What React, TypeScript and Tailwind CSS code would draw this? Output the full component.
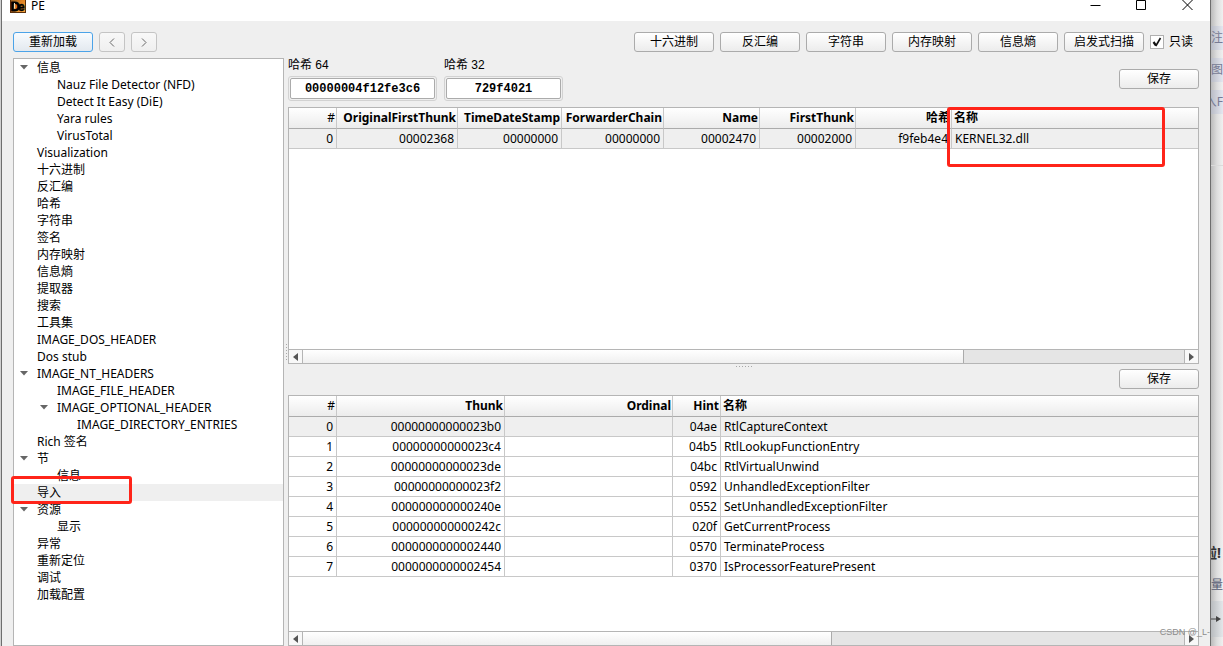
import { useState } from "react";
import clsx from "clsx";

interface TreeItem {
  label: string;
  level: 0 | 1 | 2;
  open?: boolean;
}

const TREE: TreeItem[] = [
  { label: "信息", level: 0, open: true },
  { label: "Nauz File Detector (NFD)", level: 1 },
  { label: "Detect It Easy (DiE)", level: 1 },
  { label: "Yara rules", level: 1 },
  { label: "VirusTotal", level: 1 },
  { label: "Visualization", level: 0 },
  { label: "十六进制", level: 0 },
  { label: "反汇编", level: 0 },
  { label: "哈希", level: 0 },
  { label: "字符串", level: 0 },
  { label: "签名", level: 0 },
  { label: "内存映射", level: 0 },
  { label: "信息熵", level: 0 },
  { label: "提取器", level: 0 },
  { label: "搜索", level: 0 },
  { label: "工具集", level: 0 },
  { label: "IMAGE_DOS_HEADER", level: 0 },
  { label: "Dos stub", level: 0 },
  { label: "IMAGE_NT_HEADERS", level: 0, open: true },
  { label: "IMAGE_FILE_HEADER", level: 1 },
  { label: "IMAGE_OPTIONAL_HEADER", level: 1, open: true },
  { label: "IMAGE_DIRECTORY_ENTRIES", level: 2 },
  { label: "Rich 签名", level: 0 },
  { label: "节", level: 0, open: true },
  { label: "信息", level: 1 },
  { label: "导入", level: 0 },
  { label: "资源", level: 0, open: true },
  { label: "显示", level: 1 },
  { label: "异常", level: 0 },
  { label: "重新定位", level: 0 },
  { label: "调试", level: 0 },
  { label: "加载配置", level: 0 },
];

const INDENT = ["pl-[6px]", "pl-[26px]", "pl-[46px]"];

const TOOLS = ["十六进制", "反汇编", "字符串", "内存映射", "信息熵", "启发式扫描"];

interface Column {
  title: string;
  width: string;
  left?: boolean;
}

const IMPORT_COLUMNS: Column[] = [
  { title: "#", width: "w-[48px]" },
  { title: "OriginalFirstThunk", width: "w-[121px]" },
  { title: "TimeDateStamp", width: "w-[104px]" },
  { title: "ForwarderChain", width: "w-[102px]" },
  { title: "Name", width: "w-[96px]" },
  { title: "FirstThunk", width: "w-[96px]" },
  { title: "哈希", width: "w-[96px]" },
  { title: "名称", width: "w-auto", left: true },
];

const IMPORT_ROWS = [
  ["0", "00002368", "00000000", "00000000", "00002470", "00002000", "f9feb4e4", "KERNEL32.dll"],
];

const THUNK_COLUMNS: Column[] = [
  { title: "#", width: "w-[48px]" },
  { title: "Thunk", width: "w-[168px]" },
  { title: "Ordinal", width: "w-[168px]" },
  { title: "Hint", width: "w-[48px]" },
  { title: "名称", width: "w-auto", left: true },
];

const THUNK_ROWS = [
  ["0", "00000000000023b0", "", "04ae", "RtlCaptureContext"],
  ["1", "00000000000023c4", "", "04b5", "RtlLookupFunctionEntry"],
  ["2", "00000000000023de", "", "04bc", "RtlVirtualUnwind"],
  ["3", "00000000000023f2", "", "0592", "UnhandledExceptionFilter"],
  ["4", "000000000000240e", "", "0552", "SetUnhandledExceptionFilter"],
  ["5", "000000000000242c", "", "020f", "GetCurrentProcess"],
  ["6", "0000000000002440", "", "0570", "TerminateProcess"],
  ["7", "0000000000002454", "", "0370", "IsProcessorFeaturePresent"],
];

function PushButton({ children, focused }: { children: React.ReactNode; focused?: boolean }) {
  return (
    <button
      type="button"
      className={clsx(
        "h-5 w-20 shrink-0 rounded-[3px] border text-center leading-[18px] whitespace-nowrap",
        focused
          ? "border-[#4ba3e8] bg-linear-to-b from-[#f8fbfe] to-[#e3e9ef]"
          : "border-[#ababab] bg-linear-to-b from-white to-[#ececec]"
      )}
    >
      {children}
    </button>
  );
}

function NavButton({ label, d }: { label: string; d: string }) {
  return (
    <button
      type="button"
      aria-label={label}
      className="flex h-5 w-[26px] items-center justify-center rounded-[3px] border border-[#c4c4c4] bg-linear-to-b from-[#f8f8f8] to-[#efefef]"
    >
      <svg width="6" height="9" viewBox="0 0 6 9" fill="none" stroke="#666" strokeWidth="1">
        <path d={d} />
      </svg>
    </button>
  );
}

function HashField({ id, label, value, width }: { id: string; label: string; value: string; width: string }) {
  return (
    <div className="flex flex-col gap-1">
      <label htmlFor={id} className="h-[14px] font-['Liberation_Sans','Noto_Sans_CJK_SC',sans-serif] leading-[14px]">
        {label}
      </label>
      <div className={clsx("rounded-[3px] border border-[#d2d2d2] p-px", width)}>
        <input
          id={id}
          readOnly
          value={value}
          className="block h-[21px] w-full rounded-[2px] border border-[#ababab] bg-white text-center font-['Liberation_Mono',monospace] font-bold outline-none"
        />
      </div>
    </div>
  );
}

function ScrollBar({ thumb }: { thumb: number }) {
  return (
    <div className="flex h-[14px] shrink-0 border-t border-[#b5b5b5] bg-[#e5e5e5]">
      <button
        type="button"
        aria-label="向左滚动"
        className="flex w-[14px] items-center justify-center border-r border-[#b5b5b5] bg-[#f8f8f8]"
      >
        <svg width="5" height="8" viewBox="0 0 5 8" fill="#555">
          <path d="M5 0v8L0 4z" />
        </svg>
      </button>
      <div className="flex-1">
        <div
          className="h-full border-r border-[#ababab] bg-linear-to-b from-white to-[#f0f0f0]"
          style={{ width: `${thumb}%` }}
        />
      </div>
      <button
        type="button"
        aria-label="向右滚动"
        className="flex w-[14px] items-center justify-center border-l border-[#b5b5b5] bg-[#f8f8f8]"
      >
        <svg width="5" height="8" viewBox="0 0 5 8" fill="#555">
          <path d="M0 0v8l5-4z" />
        </svg>
      </button>
    </div>
  );
}

function DataTable({ columns, rows, thumb }: { columns: Column[]; rows: string[][]; thumb: number }) {
  return (
    <div className="flex min-h-0 flex-1 flex-col border border-[#b5b5b5] bg-white">
      <div className="min-h-0 flex-1 overflow-hidden">
        <table className="w-full table-fixed border-separate border-spacing-0">
          <thead>
            <tr className="bg-linear-to-b from-white to-[#ebebeb]">
              {columns.map((col, i) => (
                <th
                  key={col.title}
                  scope="col"
                  className={clsx(
                    "h-[21px] border-b border-b-[#ababab] p-0 whitespace-nowrap",
                    col.width,
                    i === 0 ? "font-normal" : "font-bold",
                    col.left ? "pl-[2px] text-left" : "border-r border-r-[#c8c8c8] pr-px text-right"
                  )}
                >
                  {col.title}
                </th>
              ))}
            </tr>
          </thead>
          <tbody>
            {rows.map((row, r) => (
              <tr key={row[0]} className={r === 0 ? "bg-[#efefef]" : "bg-white"}>
                {row.map((cell, c) => (
                  <td
                    key={c}
                    className={clsx(
                      "h-5 border-b border-[#c8c8c8] p-0 whitespace-nowrap",
                      columns[c].left ? "pl-[3px] text-left" : "border-r pr-[3px] text-right"
                    )}
                  >
                    {cell}
                  </td>
                ))}
              </tr>
            ))}
          </tbody>
        </table>
      </div>
      <ScrollBar thumb={thumb} />
    </div>
  );
}

function Grip({ vertical }: { vertical?: boolean }) {
  return (
    <div className={clsx("flex items-center justify-center gap-[2px]", vertical ? "w-1 flex-col" : "h-1")}>
      {[0, 1, 2, 3, 4, 5].map((i) => (
        <span key={i} className="size-px bg-[#a8a8a8]" />
      ))}
    </div>
  );
}

function TitleBar() {
  return (
    <header className="flex h-[21px] shrink-0 items-start bg-white pl-2">
      <svg width="16" height="13" viewBox="0 3 16 13">
        <defs>
          <linearGradient id="logo" x1="0" y1="0" x2="1" y2="1">
            <stop offset="0" stopColor="#8a5a24" />
            <stop offset="0.5" stopColor="#e08526" />
            <stop offset="1" stopColor="#f9a13a" />
          </linearGradient>
        </defs>
        <rect width="16" height="16" fill="#5a300c" />
        <rect x="1" y="1" width="14" height="14" fill="url(#logo)" />
        <text x="0.500" y="13.500" fontSize="13" fontWeight="bold" fontFamily="Liberation Sans" fill="#000" stroke="#000" strokeWidth="0.8">
          D
        </text>
        <text x="8" y="14" fontSize="12" fontWeight="bold" fontFamily="Liberation Sans" fill="#000" stroke="#000" strokeWidth="0.5">
          e
        </text>
        <path d="M4.500 6v5.500" stroke="#f0dcc0" strokeWidth="1" />
      </svg>
      <h1 className="ml-[5px] flex-1 leading-3">PE</h1>
      <button type="button" aria-label="最小化" className="flex w-[46px] justify-center">
        <svg width="11" height="11" viewBox="0 0 11 11" stroke="#000">
          <path d="M.5 5.500h10" />
        </svg>
      </button>
      <button type="button" aria-label="最大化" className="flex w-[46px] justify-center">
        <svg width="11" height="11" viewBox="0 0 11 11" fill="none" stroke="#000">
          <path d="M.5 .5h9v9h-9z" />
        </svg>
      </button>
      <button type="button" aria-label="关闭" className="flex w-[46px] justify-center">
        <svg width="11" height="11" viewBox="0 0 11 11" stroke="#000">
          <path d="M.5 0l10 10M10.500 0l-10 10" />
        </svg>
      </button>
    </header>
  );
}

// Sliver of the page that lies behind the window
function Backdrop() {
  return (
    <aside
      aria-hidden="true"
      className="flex w-3 shrink-0 flex-col overflow-hidden bg-linear-to-r from-[#bcbcbc] via-[#dedede] to-[#f0f0f0] whitespace-nowrap text-[#777b94]"
    >
      <div className="mt-[26px] flex h-6 items-center bg-linear-to-r from-[#b9bcc6] to-[#e4e7f0]">注</div>
      <div className="mt-2 flex h-6 items-center bg-linear-to-r from-[#b9bcc6] to-[#e4e7f0]">图</div>
      <div className="mt-2 flex h-6 items-center justify-end bg-linear-to-r from-[#b9bcc6] to-[#e4e7f0]">入F</div>
      <div className="mt-[51px] h-px shrink-0 bg-[#dadada]" />
      <div className="flex-1" />
      <div className="flex h-6 items-center justify-end pr-[2px] text-sm font-bold text-[#333]">啦!</div>
      <div className="mt-2 flex h-6 items-center text-[#555a72]">量</div>
      <div className="mt-1 mb-[9px] flex h-9 items-center bg-linear-to-r from-[#b9bcbf] to-[#e4e7ea]">
        <svg width="10" height="8" viewBox="0 0 10 8" fill="#444" stroke="#444">
          <path d="M0 4h6" />
          <path d="M5 1v6l5-3z" stroke="none" />
        </svg>
      </div>
    </aside>
  );
}

export default function App() {
  const [selected, setSelected] = useState(25);
  const [readOnly, setReadOnly] = useState(true);

  return (
    <div className="relative flex h-screen overflow-hidden bg-[#d0d0d0] pl-px font-['Noto_Sans','Noto_Sans_CJK_SC',sans-serif] text-xs text-black">
      <div className="flex min-w-0 flex-1 flex-col border-x border-[#6e6e6e] bg-[#efefef]">
        <TitleBar />

        <div className="flex items-center gap-[6px] pt-[11px] pr-[17px] pb-[6px] pl-[11px]">
          <PushButton focused>重新加载</PushButton>
          <NavButton label="后退" d="M5 .5l-4 4 4 4" />
          <NavButton label="前进" d="M1 .5l4 4-4 4" />
          <div className="flex-1" />
          {TOOLS.map((tool) => (
            <PushButton key={tool}>{tool}</PushButton>
          ))}
          <label className="flex items-center gap-[5px] whitespace-nowrap">
            <span className="relative flex">
              <input
                type="checkbox"
                checked={readOnly}
                onChange={(e) => setReadOnly(e.target.checked)}
                className="size-[14px] appearance-none border border-[#b0b0b0] bg-white"
              />
              {readOnly && (
                <svg className="pointer-events-none absolute inset-0" width="14" height="14" viewBox="0 0 14 14" fill="none" stroke="#111">
                  <path d="M3.500 7l2.500 3.500" strokeWidth="2.200" />
                  <path d="M5.800 11l4.700-8" strokeWidth="1.600" />
                </svg>
              )}
            </span>
            只读
          </label>
        </div>

        <main className="flex min-h-0 flex-1 px-[11px]">
          <nav className="w-[271px] shrink-0 border border-[#b5b5b5] bg-white">
            <ul>
              {TREE.map((item, i) => (
                <li key={i} className="relative">
                  <button
                    type="button"
                    onClick={() => setSelected(i)}
                    className={clsx(
                      "flex h-[17px] w-full items-center gap-[9px] text-left leading-[17px] whitespace-nowrap",
                      INDENT[item.level],
                      selected === i && "bg-[#efefef]"
                    )}
                  >
                    <svg width="8" height="5" viewBox="0 0 8 5" className="shrink-0">
                      {item.open && <path d="M0 0h8L4 4.500z" fill="#666" />}
                    </svg>
                    {item.label}
                  </button>
                  {item.label === "导入" && (
                    <span className="pointer-events-none absolute -top-2 -left-[3px] z-10 h-7 w-[121px] rounded-[3px] border-3 border-[#ff2419]" />
                  )}
                </li>
              ))}
            </ul>
          </nav>

          <Grip vertical />

          <div className="flex min-w-0 flex-1 flex-col">
            <section className="relative flex min-h-0 flex-[306] flex-col">
              <div className="flex items-start gap-[7px] pb-[6px]">
                <HashField id="hash64" label="哈希 64" value="00000004f12fe3c6" width="w-[149px]" />
                <HashField id="hash32" label="哈希 32" value="729f4021" width="w-[119px]" />
                <div className="flex flex-1 justify-end pt-[11px]">
                  <PushButton>保存</PushButton>
                </div>
              </div>
              <DataTable columns={IMPORT_COLUMNS} rows={IMPORT_ROWS} thumb={75} />
              <span className="pointer-events-none absolute top-[49px] left-[659px] h-[60px] w-[218px] rounded-[3px] border-3 border-[#ff2419]" />
            </section>

            <Grip />

            <section className="flex min-h-0 flex-[277] flex-col gap-[6px] pt-px">
              <div className="flex justify-end">
                <PushButton>保存</PushButton>
              </div>
              <DataTable columns={THUNK_COLUMNS} rows={THUNK_ROWS} thumb={60} />
            </section>
          </div>
        </main>
      </div>

      <Backdrop />

      <span className="pointer-events-none absolute right-[13px] bottom-2 font-['Liberation_Sans',sans-serif] text-[9px] leading-3 text-[#8c8c8c]">
        CSDN @_L-
      </span>
    </div>
  );
}
